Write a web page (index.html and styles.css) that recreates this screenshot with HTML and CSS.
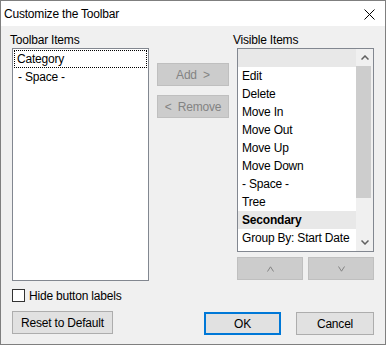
FILE: index.html
```html
<!DOCTYPE html>
<html>
<head>
<meta charset="utf-8">
<title>Customize the Toolbar</title>
<link rel="stylesheet" href="styles.css">
</head>
<body>
<div class="window">
  <div class="titlebar">
    <span class="title">Customize the Toolbar</span>
    <svg class="close" width="11" height="11" viewBox="0 0 11 11"><path d="M0.5 0.5 L10.5 10.5 M10.5 0.5 L0.5 10.5" stroke="#000" stroke-width="1" fill="none"/></svg>
  </div>
  <div class="client">
    <div class="columns">
      <div class="col col-left">
        <div class="label">Toolbar Items</div>
        <div class="listbox list-left">
          <div class="item focused">Category</div>
          <div class="item">- Space -</div>
        </div>
      </div>
      <div class="col col-mid">
        <div class="btn disabled">Add&nbsp; &gt;</div>
        <div class="btn disabled">&lt;&nbsp; Remove</div>
      </div>
      <div class="col col-right">
        <div class="label">Visible Items</div>
        <div class="listbox list-right">
          <div class="rows">
            <div class="row hl"></div>
            <div class="row">Edit</div>
            <div class="row">Delete</div>
            <div class="row">Move In</div>
            <div class="row">Move Out</div>
            <div class="row">Move Up</div>
            <div class="row">Move Down</div>
            <div class="row">- Space -</div>
            <div class="row">Tree</div>
            <div class="row hl bold">Secondary</div>
            <div class="row">Group By: Start Date</div>
          </div>
          <div class="scrollbar">
            <div class="arrow">
              <svg width="8" height="5" viewBox="0 0 8 5"><path d="M0.5 4.5 L4 1 L7.5 4.5" stroke="#606060" stroke-width="1.5" fill="none"/></svg>
            </div>
            <div class="track"><div class="thumb"></div></div>
            <div class="arrow">
              <svg width="8" height="5" viewBox="0 0 8 5"><path d="M0.5 0.5 L4 4 L7.5 0.5" stroke="#606060" stroke-width="1.5" fill="none"/></svg>
            </div>
          </div>
        </div>
        <div class="updown">
          <div class="btn disabled small">
            <svg width="7" height="6" viewBox="0 0 7 6"><path d="M0.5 5.5 L3.5 0.8 L6.5 5.5" stroke="#838383" stroke-width="1" fill="none"/></svg>
          </div>
          <div class="btn disabled small">
            <svg width="7" height="6" viewBox="0 0 7 6"><path d="M0.5 0.5 L3.5 5.2 L6.5 0.5" stroke="#838383" stroke-width="1" fill="none"/></svg>
          </div>
        </div>
      </div>
    </div>
    <div class="check-row">
      <span class="checkbox"></span>
      <span class="check-label">Hide button labels</span>
    </div>
    <div class="bottom-row">
      <div class="btn reset">Reset to Default</div>
      <div class="right-btns">
        <div class="btn ok">OK</div>
        <div class="btn cancel">Cancel</div>
      </div>
    </div>
  </div>
</div>
</body>
</html>
```

FILE: styles.css
```css
html, body {
  margin: 0;
  padding: 0;
  background: #f0f0f0;
}
body {
  font-family: "Liberation Sans", Arial, sans-serif;
  font-size: 12px;
  letter-spacing: -0.2px;
  color: #000;
}
.window {
  width: 386px;
  height: 345px;
  box-sizing: border-box;
  border: 1px solid #7f7f7f;
  background: #f0f0f0;
  display: flex;
  flex-direction: column;
}
.titlebar {
  height: 25px;
  flex: none;
  background: #fff;
  display: flex;
  align-items: center;
  justify-content: space-between;
  padding-left: 3px;
  padding-right: 10px;
}
.title {
  line-height: 16px;
}
.close {
  display: block;
  margin-top: 1px;
}
.client {
  flex: 1;
  padding: 6px 11px 0 9px;
  display: flex;
  flex-direction: column;
}
.columns {
  display: flex;
}
.col {
  display: flex;
  flex-direction: column;
}
.col-left {
  width: 139px;
}
.col-mid {
  width: 72px;
  margin-left: 8px;
  padding-top: 31px;
  gap: 9px;
}
.col-right {
  width: 141px;
  margin-left: 4px;
}
.label {
  height: 16px;
  line-height: 16px;
}
.listbox {
  box-sizing: border-box;
  border: 1px solid #828790;
  background: #fff;
  width: 137px;
}
.list-left {
  margin-left: 2px;
  height: 233px;
  padding-top: 1px;
}
.item {
  height: 18px;
  line-height: 18px;
  box-sizing: border-box;
  padding-left: 4px;
  margin: 0 1px;
}
.item.focused {
  border: 1px dotted #000;
  padding-left: 2px;
  line-height: 16px;
}
.list-right {
  margin-left: 4px;
  height: 204px;
  display: flex;
}
.rows {
  flex: 1;
}
.row {
  height: 18px;
  line-height: 19px;
  padding-left: 4px;
  white-space: nowrap;
}
.row.hl {
  background: #e8e8e8;
}
.row.bold {
  font-weight: bold;
}
.scrollbar {
  width: 17px;
  background: #f0f0f0;
  display: flex;
  flex-direction: column;
}
.arrow {
  height: 17px;
  display: flex;
  align-items: center;
  justify-content: center;
}
.arrow svg {
  display: block;
}
.track {
  flex: 1;
}
.thumb {
  height: 132px;
  margin: 0 2px 0 0;
  background: #cdcdcd;
}
.updown {
  display: flex;
  gap: 5px;
  margin-left: 4px;
  margin-top: 5px;
}
.btn {
  box-sizing: border-box;
  height: 23px;
  border: 1px solid #adadad;
  background: #e1e1e1;
  display: flex;
  align-items: center;
  justify-content: center;
  white-space: nowrap;
}
.btn.disabled {
  background: #cccccc;
  border-color: #bfbfbf;
  color: #838383;
}
.btn.small {
  width: 66px;
}
.btn.small svg {
  display: block;
}
.check-row {
  display: flex;
  align-items: center;
  margin-top: 8px;
  margin-left: 2px;
  height: 13px;
}
.checkbox {
  width: 13px;
  height: 13px;
  box-sizing: border-box;
  border: 1px solid #333;
  background: #fff;
}
.check-label {
  margin-left: 4px;
  line-height: 16px;
}
.bottom-row {
  display: flex;
  justify-content: space-between;
  align-items: flex-start;
  margin-top: 9px;
}
.reset {
  width: 101px;
  margin-left: 2px;
}
.right-btns {
  display: flex;
  gap: 15px;
  margin-top: 1px;
}
.ok {
  width: 77px;
  border: 2px solid #0078d7;
}
.cancel {
  width: 78px;
}
```
